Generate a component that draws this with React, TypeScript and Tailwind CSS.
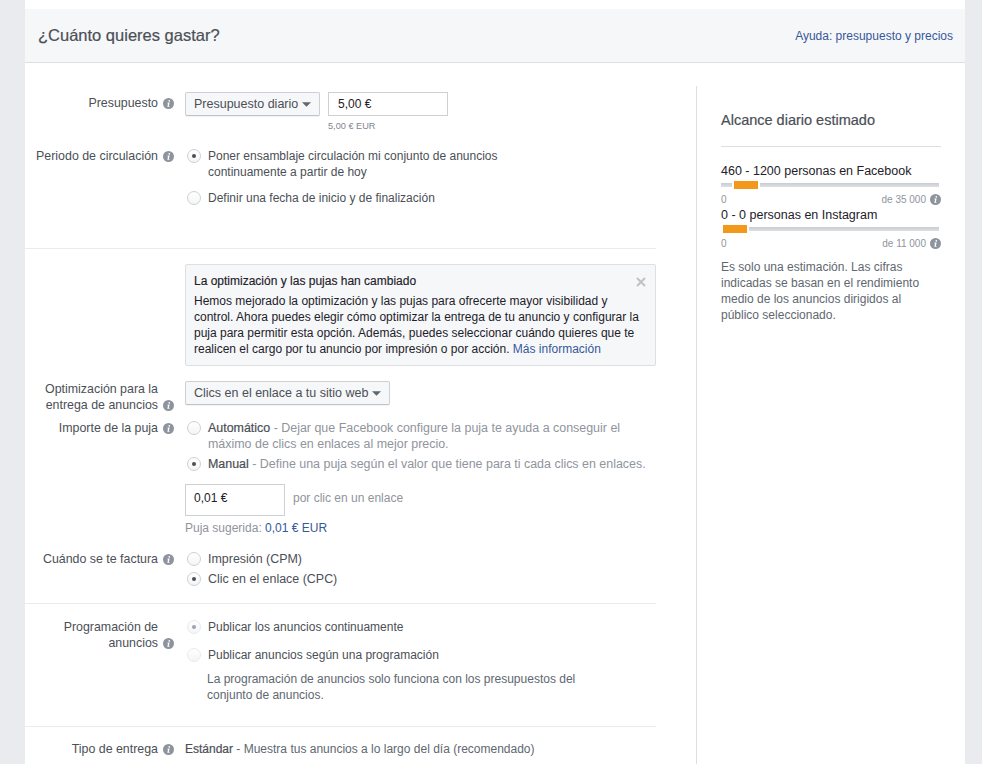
import type { ReactNode } from "react";

function Info({ className = "" }: { className?: string }) {
  return (
    <svg viewBox="0 0 12 12" className={`block w-[11px] h-[11px] shrink-0 ${className}`}>
      <circle cx="6" cy="6" r="6" fill="#8d949e" />
      <path d="M6.9 2.2a.9.9 0 1 1-.1 1.8.9.9 0 0 1 .1-1.8zM5 5h2.2L6.4 8.7h.8l-.2.9H4.7L5.5 5.9H4.8z" fill="#fff" />
    </svg>
  );
}

function Radio({ on = false, faded = false }: { on?: boolean; faded?: boolean }) {
  return (
    <span
      className={`w-[14px] h-[14px] rounded-full border flex items-center justify-center shrink-0 bg-gradient-to-b from-white to-[#f4f5f6] ${
        faded ? "border-[#e9ebee]" : "border-[#ced0d4]"
      }`}
    >
      {on && <span className={`w-[4px] h-[4px] rounded-full ${faded ? "bg-[#9da3ae]" : "bg-[#4b4f56]"}`} />}
    </span>
  );
}

function Label({ children }: { children: ReactNode }) {
  return (
    <div className="w-[150px] shrink-0 self-start pr-[1px] flex justify-end items-end gap-[5px] text-right text-[12.4px] text-[#4b4f56] leading-[16px]">
      <div>{children}</div>
      <Info className="mb-[2px]" />
    </div>
  );
}

function Option({ on, faded, gap = "", children }: { on?: boolean; faded?: boolean; gap?: string; children: ReactNode }) {
  return (
    <div className={`flex gap-[7px] ${gap}`}>
      <div className="pl-[2px] pt-[1px]">
        <Radio on={on} faded={faded} />
      </div>
      {children}
    </div>
  );
}

function Select({ label, width }: { label: string; width: string }) {
  return (
    <div className={`${width} h-[24px] border border-[#ced0d4] border-b-[#bec2c9] rounded-[2px] bg-[#f6f7f9] shadow-[0_1px_1px_rgba(0,0,0,0.05)] flex items-center pl-[8px] text-[12.5px] text-[#4b4f56]`}>
      <span>{label}</span>
      <svg viewBox="0 0 8 4" className="w-[9px] h-[5px] ml-[4px] mt-[1px]">
        <path d="M0 0h8L4 4z" fill="#606770" />
      </svg>
    </div>
  );
}

function Bar({ range, total, left, before }: { range: string; total: string; left: string; before: boolean }) {
  return (
    <div>
      <div className="text-[#1d2129] text-[12.5px] leading-[16px]">{range}</div>
      <div className="flex items-center h-[8px] mt-[2px] gap-[2px] w-[218px]">
        {before && <div className="h-[4px] w-[11px] bg-gradient-to-b from-[#c9ccd3] to-[#dddfe2]" />}
        <div className={`h-[8px] w-[24px] bg-[#f4981b] ${left}`} />
        <div className="h-[4px] flex-1 bg-gradient-to-b from-[#c9ccd3] to-[#dddfe2]" />
      </div>
      <div className="flex justify-between items-center h-[16px] mt-[2px] text-[10px] text-[#90949c]">
        <span>0</span>
        <span className="flex items-center gap-[4px]">
          {total}
          <Info />
        </span>
      </div>
    </div>
  );
}

export default function App() {
  return (
    <div className="h-[764px] overflow-hidden bg-[#e9ebee] pl-[25px] pr-[17px] text-[12px] font-['Liberation_Sans',Arial,sans-serif]">
      <div className="bg-white h-full pt-[9px]">
        {/* Header */}
        <div className="h-[54px] bg-[#f6f7f9] border-b border-[#dddfe2] flex items-center justify-between pl-[13px] pr-[12px]">
          <h1 className="text-[16.5px] font-normal text-[#4b4f56] [-webkit-text-stroke:0.2px_#4b4f56]">¿Cuánto quieres gastar?</h1>
          <a className="text-[#365899]">Ayuda: presupuesto y precios</a>
        </div>

        <div className="flex">
          {/* Left column */}
          <div className="w-[631px] shrink-0">
            {/* Budget */}
            <section className="h-[186px] border-b border-[#e9ebee] pt-[29px]">
              <div className="flex gap-[10px]">
                <div className="pt-[3px]"><Label>Presupuesto</Label></div>
                <div>
                  <div className="flex gap-[8px]">
                    <Select label="Presupuesto diario" width="w-[135px]" />
                    <div className="w-[120px] h-[24px] border border-[#ced0d4] flex items-center pl-[9px] text-[#1d2129]">5,00 €</div>
                  </div>
                  <div className="ml-[143px] mt-[4px] text-[9.2px] leading-[12px] text-[#7f8591]">5,00 € EUR</div>
                </div>
              </div>
              <div className="flex gap-[10px] mt-[16px]">
                <Label>Periodo de circulación</Label>
                <div className="text-[#4b4f56] leading-[16px]">
                  <Option on>
                    <div className="w-[300px]">Poner ensamblaje circulación mi conjunto de anuncios continuamente a partir de hoy</div>
                  </Option>
                  <Option gap="mt-[10px]">
                    <div>Definir una fecha de inicio y de finalización</div>
                  </Option>
                </div>
              </div>
            </section>

            {/* Optimization */}
            <section className="h-[355px] border-b border-[#e9ebee] pt-[15px]">
              <div className="ml-[160px] h-[102px] relative bg-[#f6f7f9] border border-[#dddfe2] rounded-[2px] px-[8px] pt-[8px] leading-[16px] text-[#1d2129]">
                <div className="mb-[4px] text-[12px] [-webkit-text-stroke:0.15px_#1d2129]">La optimización y las pujas han cambiado</div>
                <p>
                  Hemos mejorado la optimización y las pujas para ofrecerte mayor visibilidad y control. Ahora puedes elegir cómo optimizar la entrega de tu anuncio y configurar la puja para permitir esta opción. Además, puedes seleccionar cuándo quieres que te realicen el cargo por tu anuncio por impresión o por acción. <a className="text-[#365899]">Más información</a>
                </p>
                <svg viewBox="0 0 10 10" className="absolute right-[9px] top-[12px] w-[10px] h-[10px]">
                  <path d="M1 1l8 8M9 1l-8 8" stroke="#bec2c9" strokeWidth="2" />
                </svg>
              </div>

              <div className="flex gap-[10px] mt-[15px]">
                <Label>Optimización para la<br />entrega de anuncios</Label>
                <Select label="Clics en el enlace a tu sitio web" width="w-[205px]" />
              </div>

              <div className="flex gap-[10px] mt-[7px]">
                <Label>Importe de la puja</Label>
                <div className="leading-[16px] text-[#90949c]">
                  <Option>
                    <div className="w-[445px] text-[12.45px]"><span className="text-[#4b4f56] [-webkit-text-stroke:0.2px_#4b4f56]">Automático</span> - Dejar que Facebook configure la puja te ayuda a conseguir el máximo de clics en enlaces al mejor precio.</div>
                  </Option>
                  <Option on gap="mt-[4px]">
                    <div className="text-[12.45px]"><span className="text-[#4b4f56] [-webkit-text-stroke:0.2px_#4b4f56]">Manual</span> - Define una puja según el valor que tiene para ti cada clics en enlaces.</div>
                  </Option>
                  <div className="flex items-center gap-[8px] mt-[12px]">
                    <div className="w-[100px] h-[32px] border border-[#ced0d4] flex items-center pl-[8px] pb-[4px] text-[#1d2129]">0,01 €</div>
                    <span className="pb-[4px]">por clic en un enlace</span>
                  </div>
                  <div className="mt-[4px]">Puja sugerida: <span className="text-[#365899]">0,01 € EUR</span></div>
                </div>
              </div>

              <div className="flex gap-[10px] mt-[15px]">
                <Label>Cuándo se te factura</Label>
                <div className="leading-[16px] text-[12.45px] text-[#4b4f56]">
                  <Option>
                    <div>Impresión (CPM)</div>
                  </Option>
                  <Option on gap="mt-[4px]">
                    <div>Clic en el enlace (CPC)</div>
                  </Option>
                </div>
              </div>
            </section>

            {/* Schedule */}
            <section className="h-[123px] border-b border-[#e9ebee] pt-[15px]">
              <div className="flex gap-[10px]">
                <Label>Programación de<br />anuncios</Label>
                <div className="leading-[16px] text-[#4b4f56]">
                  <Option on faded>
                    <div>Publicar los anuncios continuamente</div>
                  </Option>
                  <Option faded gap="mt-[12px]">
                    <div>Publicar anuncios según una programación</div>
                  </Option>
                  <div className="ml-[22px] mt-[8px] w-[380px] text-[#606770]">La programación de anuncios solo funciona con los presupuestos del conjunto de anuncios.</div>
                </div>
              </div>
            </section>

            {/* Delivery */}
            <section className="pt-[14px]">
              <div className="flex gap-[10px]">
                <Label>Tipo de entrega</Label>
                <div className="leading-[16px] text-[#606770]"><span className="text-[#4b4f56] [-webkit-text-stroke:0.2px_#4b4f56]">Estándar</span> - Muestra tus anuncios a lo largo del día (recomendado)</div>
              </div>
            </section>
          </div>

          {/* Right column */}
          <aside className="ml-[40px] mt-[23px] h-[700px] border-l border-[#dddfe2] pl-[24px] pr-[24px] flex-1">
            <div className="pt-[25px] pb-[17px] border-b border-[#dddfe2] text-[14.5px] leading-[18px] text-[#4b4f56] [-webkit-text-stroke:0.2px_#4b4f56]">Alcance diario estimado</div>
            <div className="mt-[16px] w-[220px]">
              <Bar range="460 - 1200 personas en Facebook" total="de 35 000" left="" before />
              <Bar range="0 - 0 personas en Instagram" total="de 11 000" left="ml-[2px]" before={false} />
            </div>
            <p className="mt-[8px] leading-[16px] text-[#606770]">Es solo una estimación. Las cifras indicadas se basan en el rendimiento medio de los anuncios dirigidos al público seleccionado.</p>
          </aside>
        </div>
      </div>
    </div>
  );
}
